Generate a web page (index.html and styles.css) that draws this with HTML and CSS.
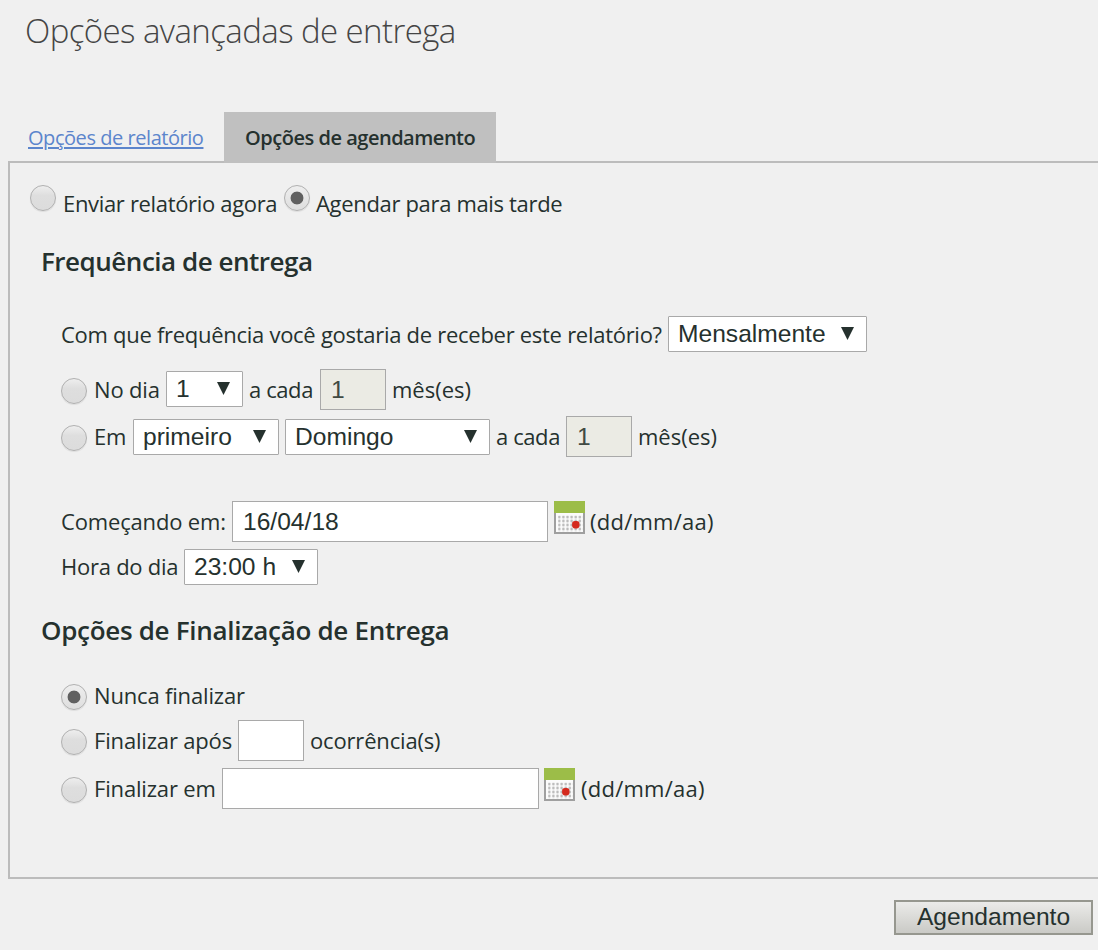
FILE: index.html
```
<!DOCTYPE html>
<html lang="pt-BR">
<head>
<meta charset="utf-8">
<title>Opções avançadas de entrega</title>
<link rel="stylesheet" href="styles.css">
</head>
<body>
<svg class="defs" width="0" height="0" aria-hidden="true">
  <defs>
    <pattern id="dots" width="4.1" height="4" patternUnits="userSpaceOnUse" x="4" y="14.5">
      <circle cx="1.3" cy="1.4" r="1.25" fill="#b0b0b0"/>
    </pattern>
    <symbol id="calendar" viewBox="0 0 31 34">
      <rect x="0" y="0" width="31" height="33" fill="#9f9f9f"/>
      <rect x="2" y="12" width="27" height="19" fill="#fbfbfb"/>
      <rect x="0" y="0" width="31" height="12" fill="#9cbd48"/>
      <rect x="4" y="14.5" width="24.6" height="16" fill="url(#dots)"/>
      <rect x="18.1" y="20" width="7.4" height="7.4" rx="2.8" fill="#d42a1e"/>
    </symbol>
    <symbol id="arrow" viewBox="0 0 13 13"><path d="M0 0H13L6.5 13Z" fill="#25312e"/></symbol>
  </defs>
</svg>
<h1 class="title">Opções avançadas de entrega</h1>
<nav class="tabs">
  <a class="tab-link" href="#">Opções de relatório</a>
  <span class="tab-active">Opções de agendamento</span>
</nav>
<main class="panel">
  <div class="row when">
    <input class="radio" type="radio" name="when"><span class="label now">Enviar relatório agora</span>
    <input class="radio" type="radio" name="when" checked><span class="label later">Agendar para mais tarde</span>
  </div>

  <h2 class="heading frequency">Frequência de entrega</h2>
  <div class="row question">
    <span class="label ask">Com que frequência você gostaria de receber este relatório?</span>
    <div class="select">Mensalmente<svg class="arrow"><use href="#arrow"/></svg></div>
  </div>
  <div class="row day">
    <input class="radio" type="radio" name="day"><span class="label">No dia</span>
    <div class="select">1<svg class="arrow"><use href="#arrow"/></svg></div>
    <span class="label each">a cada</span>
    <input class="field off" value="1" disabled><span class="label months">mês(es)</span>
  </div>
  <div class="row week">
    <input class="radio" type="radio" name="day"><span class="label">Em</span>
    <div class="select">primeiro<svg class="arrow"><use href="#arrow"/></svg></div>
    <div class="select">Domingo<svg class="arrow"><use href="#arrow"/></svg></div>
    <span class="label each">a cada</span>
    <input class="field off" value="1" disabled><span class="label months">mês(es)</span>
  </div>
  <div class="row start">
    <span class="label starting">Começando em:</span>
    <input class="field" value="16/04/18">
    <svg class="calendar"><use href="#calendar"/></svg><span class="label format">(dd/mm/aa)</span>
  </div>
  <div class="row hour">
    <span class="label hour-label">Hora do dia</span>
    <div class="select">23:00 h<svg class="arrow"><use href="#arrow"/></svg></div>
  </div>

  <h2 class="heading ending">Opções de Finalização de Entrega</h2>
  <div class="row never">
    <input class="radio" type="radio" name="end" checked><span class="label">Nunca finalizar</span>
  </div>
  <div class="row after">
    <input class="radio" type="radio" name="end"><span class="label">Finalizar após</span>
    <input class="field"><span class="label">ocorrência(s)</span>
  </div>
  <div class="row until">
    <input class="radio" type="radio" name="end"><span class="label">Finalizar em</span>
    <input class="field"><svg class="calendar"><use href="#calendar"/></svg><span class="label format">(dd/mm/aa)</span>
  </div>
</main>
<footer class="actions"><button class="submit">Agendamento</button></footer>
</body>
</html>
```
FILE: styles.css
```
* { box-sizing: border-box; }

body {
  margin: 0;
  height: 950px;
  overflow: hidden;
  background: #f0f0f0;
  color: #25312e;
  font-family: "Open Sans", "Noto Sans", sans-serif;
  font-size: 22px;
}

.defs { display: block; }

.title {
  margin: 0;
  padding: 9px 0 0 25px;
  height: 112px;
  font-size: 33px;
  font-weight: 300;
  line-height: 44px;
  letter-spacing: -0.58px;
  color: #454545;
}

.tabs {
  display: grid;
  grid-template-columns: 196px 272px;
  height: 49px;
  margin-left: 28px;
  font-size: 20px;
  line-height: 51px;
  white-space: nowrap;
}

.tab-link {
  color: #5c85cc;
  letter-spacing: -0.45px;
  text-decoration-thickness: 2px;
  text-underline-offset: 2px;
  text-decoration-skip-ink: auto;
}

.tab-active {
  padding-left: 21px;
  background: #c0c0c0;
  font-weight: 600;
  letter-spacing: -0.48px;
}

.panel {
  height: 718px;
  margin-left: 8px;
  padding-top: 22px;
  border: 2px solid #bcbcbc;
  border-right: 0;
}

.heading {
  margin: 0 0 0 31px;
  height: 34px;
  font-size: 26px;
  font-weight: 600;
  line-height: 34px;
}

.frequency { margin-top: 33px; letter-spacing: -0.48px; }
.ending { margin-top: 25px; letter-spacing: -0.3px; }

.row {
  display: grid;
  align-items: center;
  height: 42px;
  margin-left: 51px;
}

.label {
  margin-bottom: 2px;
  line-height: 26px;
  letter-spacing: -0.17px;
  white-space: nowrap;
}

.when {
  height: 26px;
  margin-left: 20px;
  grid-template-columns: 33px 221px 32px auto;
  align-items: start;
}
.when .radio { margin: 0; }
.when .label { margin: 5px 0 0; letter-spacing: -0.33px; }

.question { margin-top: 36px; grid-template-columns: 607px 199px; }
.day { margin-top: 13px; grid-template-columns: 33px 72px 77px 6px 71px 66px 6px auto; }
.week { margin-top: 5px; grid-template-columns: 33px 39px 146px 6px 205px 6px 70px 66px 6px auto; }
.start { margin-top: 43px; grid-template-columns: 171px 316px 6px 31px 5px auto; }
.hour { margin-top: 3px; grid-template-columns: 123px 134px; }
.never { margin-top: 28px; grid-template-columns: 33px auto; }
.after { margin-top: 3px; grid-template-columns: 33px 144px 66px 6px auto; }
.until { margin-top: 6px; grid-template-columns: 33px 128px 317px 5px 31px 6px auto; }

.day .each { grid-column: 5; }
.day .field { grid-column: 6; }
.day .months { grid-column: 8; }
.week .select:nth-of-type(2) { grid-column: 5; }
.week .each { grid-column: 7; }
.week .field { grid-column: 8; }
.week .months { grid-column: 10; }
.start .calendar { grid-column: 4; }
.start .format { grid-column: 6; }
.after .label:last-child { grid-column: 5; }
.until .calendar { grid-column: 5; }
.until .format { grid-column: 7; }

.ask { letter-spacing: -0.28px; }
.each { letter-spacing: -0.4px; }
.months { letter-spacing: 0; }
.format { letter-spacing: 0.25px; }
.hour-label { letter-spacing: -0.25px; }

.radio {
  appearance: none;
  width: 26px;
  height: 26px;
  margin: 2px 0 0;
  border: 1px solid #b0b0b0;
  border-radius: 50%;
  background: linear-gradient(#eeeeee, #dedede 40%, #dcdcdc);
  box-shadow: 0 1px 1px rgba(0, 0, 0, 0.08);
}

.radio:checked {
  background:
    radial-gradient(circle, #606060 6px, transparent 6.8px),
    linear-gradient(#eeeeee, #dedede);
}

.select,
.field {
  width: 100%;
  border: 1px solid #a9a9a9;
  background: #fff;
  color: #25312e;
  font: 24.6px "Liberation Sans", Arial, sans-serif;
}

.select {
  display: flex;
  justify-content: space-between;
  height: 36px;
  padding: 0 12px 0 9px;
  border-radius: 1px;
  line-height: 34px;
  white-space: nowrap;
}

.question .select,
.day .select { margin-bottom: 2px; }
.week .select,
.hour .select { line-height: 33px; }

.arrow { width: 13px; height: 13px; margin-top: 10px; }

.field {
  height: 41px;
  margin: 0 0 1px;
  padding: 0 10px;
  border-radius: 0;
}

.off { background: #ebebe4; color: #414a43; }

.calendar { width: 31px; height: 34px; margin-bottom: 8px; }

.actions {
  display: flex;
  justify-content: flex-end;
  padding: 21px 5px 0 0;
}

.submit {
  width: 199px;
  height: 35px;
  padding: 0 0 1px;
  border: 2px solid #96978f;
  border-radius: 0;
  background: linear-gradient(#ebebe9, #cacac6);
  color: #25312e;
  font: 24.6px/30px "Liberation Sans", Arial, sans-serif;
}
```
